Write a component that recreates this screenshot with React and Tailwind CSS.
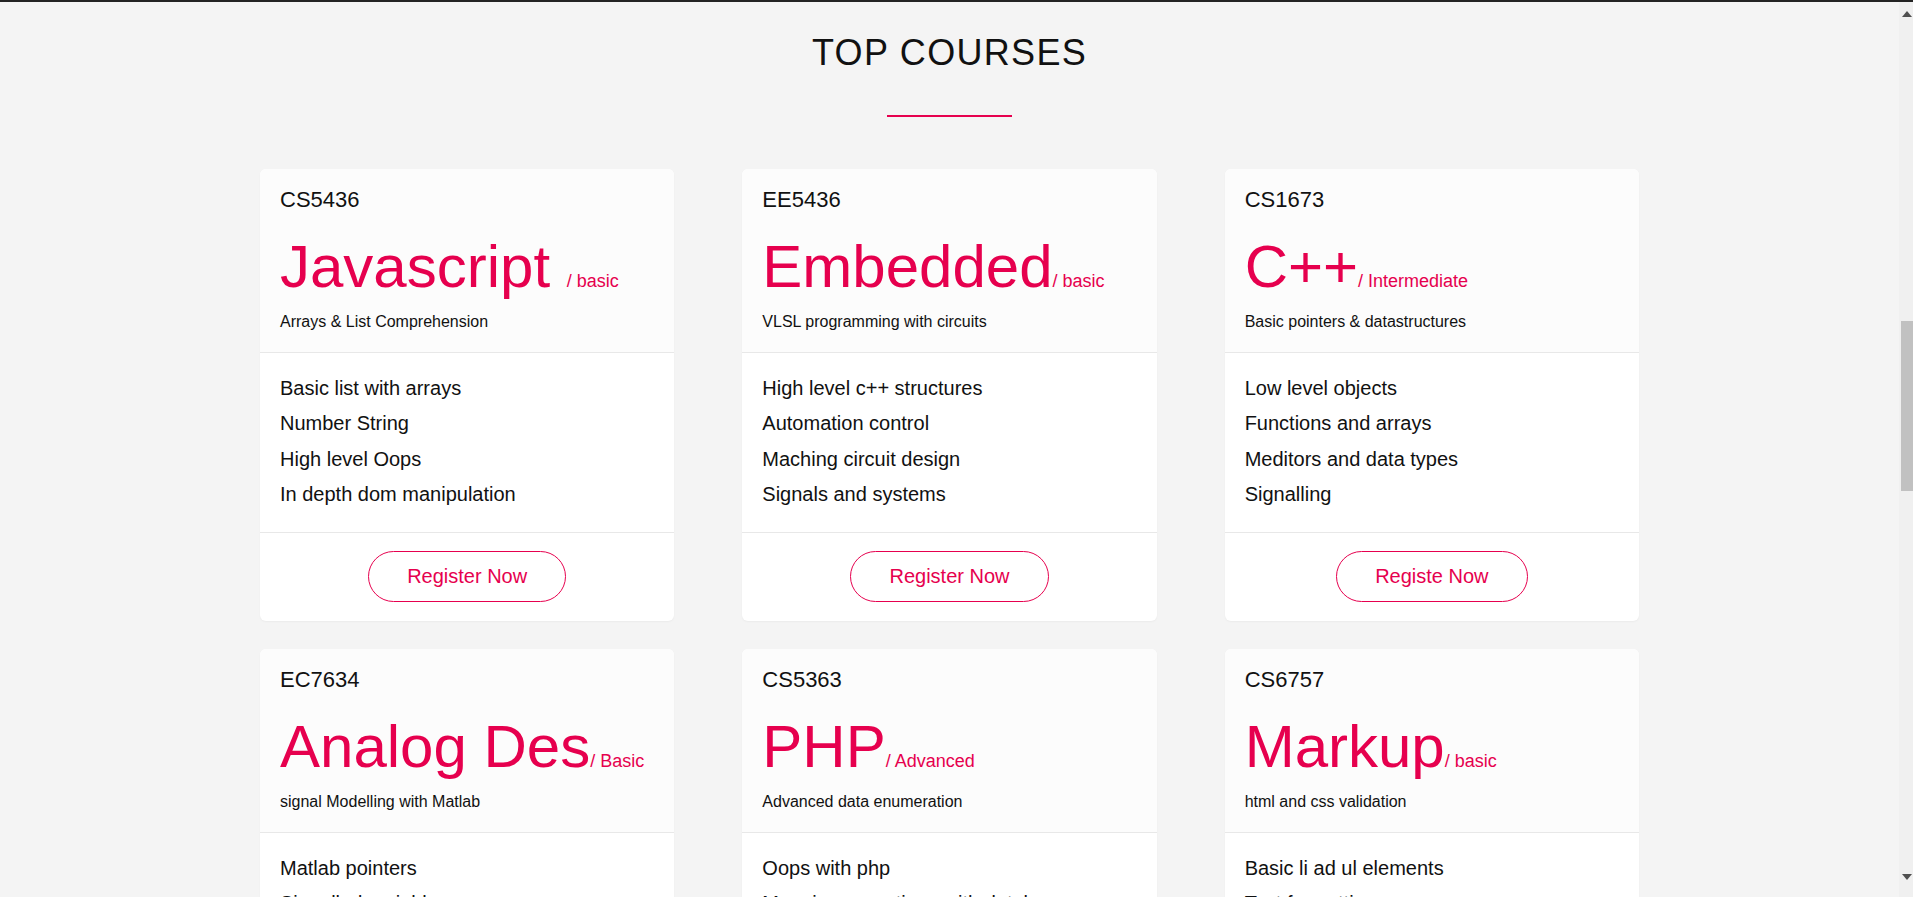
import React from "react";

const courses = [
  {
    code: "CS5436",
    title: "Javascript ",
    level: "/ basic",
    desc: "Arrays & List Comprehension",
    items: ["Basic list with arrays", "Number String", "High level Oops", "In depth dom manipulation"],
    cta: "Register Now",
  },
  {
    code: "EE5436",
    title: "Embedded",
    level: "/ basic",
    desc: "VLSL programming with circuits",
    items: ["High level c++ structures", "Automation control", "Maching circuit design", "Signals and systems"],
    cta: "Register Now",
  },
  {
    code: "CS1673",
    title: "C++",
    level: "/ Intermediate",
    desc: "Basic pointers & datastructures",
    items: ["Low level objects", "Functions and arrays", "Meditors and data types", "Signalling"],
    cta: "Registe Now",
  },
  {
    code: "EC7634",
    title: "Analog Des",
    level: "/ Basic",
    desc: "signal Modelling with Matlab",
    items: ["Matlab pointers", "Signalled variables", "Analog filters", "Circuit simulation"],
    cta: "Register Now",
  },
  {
    code: "CS5363",
    title: "PHP",
    level: "/ Advanced",
    desc: "Advanced data enumeration",
    items: ["Oops with php", "Mapping operations with databases", "Sessions and cookies", "Server side validation"],
    cta: "Register Now",
  },
  {
    code: "CS6757",
    title: "Markup",
    level: "/ basic",
    desc: "html and css validation",
    items: ["Basic li ad ul elements", "Text formatting", "Forms and tables", "Semantic layouts"],
    cta: "Register Now",
  },
];

function Card({ c }) {
  return (
    <div className="bg-white rounded-[6px] overflow-hidden shadow-[0_1px_2px_rgba(0,0,0,0.04)]">
      <div className="bg-[#fcfcfc] px-5 pt-[18px] pb-5 border-b border-[#e8e8e8]">
        <div className="text-[22px] leading-[26px] text-[#111]">{c.code}</div>
        <div className="mt-[24px] text-[60px] leading-[60px] text-[#e6004e] whitespace-pre">
          {c.title}
          <span className="text-[18px] leading-none">{c.level}</span>
        </div>
        <div className="mt-[15px] text-[16px] leading-[20px] text-[#111]">{c.desc}</div>
      </div>
      <ul className="px-5 pt-[18px] pb-[20px] border-b border-[#e8e8e8]">
        {c.items.map((it) => (
          <li key={it} className="text-[20px] leading-[35.3px] text-[#111]">
            {it}
          </li>
        ))}
      </ul>
      <div className="flex justify-center pt-[18px] pb-[19px]">
        <button className="border border-[#e6004e] rounded-full px-[38px] py-[13px] text-[20px] leading-[23px] text-[#e6004e] bg-white">
          {c.cta}
        </button>
      </div>
    </div>
  );
}

export default function App() {
  return (
    <div
      className="h-[897px] w-full overflow-hidden flex flex-col bg-[#f4f4f4]"
      style={{ fontFamily: '"Liberation Sans", Arial, sans-serif' }}
    >
      <div className="h-[2px] bg-[#232323] shrink-0" />
      <div className="flex-1 flex min-h-0">
        <main className="flex-1 min-w-0 overflow-hidden">
          <h2 className="pt-[31px] text-center text-[36px] leading-[40px] tracking-[1.3px] text-[#111] font-normal">
            TOP COURSES
          </h2>
          <div className="mx-auto mt-[42px] w-[125px] h-[2px] bg-[#e6004e]" />
          <div className="mx-auto mt-[52px] w-[1379px] grid grid-cols-3 gap-x-[68px] gap-y-[28px]">
            {courses.map((c) => (
              <Card key={c.code} c={c} />
            ))}
          </div>
        </main>
        <div className="w-[14px] shrink-0 bg-[#f0f0f0] flex flex-col items-end">
          <svg width="10" height="6" viewBox="0 0 10 6" className="mt-[9px] mr-[1px]">
            <path d="M0 6 L5 0 L10 6 Z" fill="#505050" />
          </svg>
          <div className="mt-[304px] w-[12px] h-[170px] bg-[#c1c1c1]" />
          <div className="flex-1" />
          <svg width="10" height="6" viewBox="0 0 10 6" className="mb-[17px] mr-[1px]">
            <path d="M0 0 L10 0 L5 6 Z" fill="#505050" />
          </svg>
        </div>
      </div>
    </div>
  );
}
